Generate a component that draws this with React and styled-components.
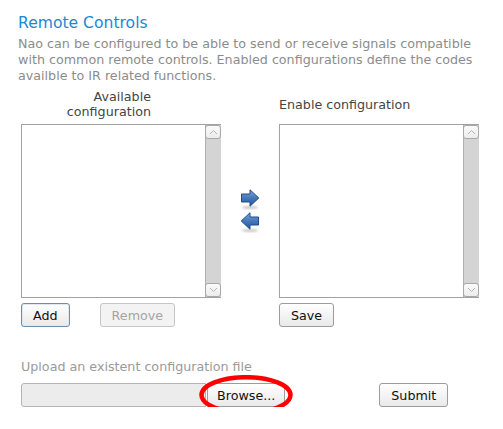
import React from 'react';
import styled, { createGlobalStyle } from 'styled-components';

const Global = createGlobalStyle`
    body {
        margin: 0;
        background: #fff;
        font-family: "DejaVu Sans", Verdana, sans-serif;
    }
`;

const Page = styled.div`
    padding: 13px 0 0 18px;
    width: 485px;
`;

const Title = styled.h2`
    margin: 0;
    font-size: 15.6px;
    line-height: 20px;
    font-weight: normal;
    color: #1a88d4;
`;

const Description = styled.p`
    margin: 3px 0 0 0;
    font-size: 12.7px;
    line-height: 16px;
    color: #8c8c8c;
    width: 470px;
`;

const Form = styled.div`
    margin: 2px 0 0 3px;
    display: grid;
    grid-template-columns: 200px 58px 200px;
`;

const Label = styled.div`
    font-size: 12.7px;
    line-height: 15px;
    color: #444;
    align-self: center;
    text-align: ${p => p.align || 'left'};
    width: ${p => p.width || 'auto'};
    padding: 3px 0 5px 0;
`;

const ListBox = styled.div`
    height: 174px;
    box-sizing: border-box;
    border: 1px solid #a2a2a2;
    background: #fff;
    display: flex;
    justify-content: flex-end;
`;

const Track = styled.div`
    width: 15px;
    margin-right: -1px;
    background: #d4d4d4;
    border-left: 1px solid #b0b0b0;
    display: flex;
    flex-direction: column;
    justify-content: space-between;
`;

const ScrollBtn = styled.div`
    height: 14px;
    box-sizing: border-box;
    border: 1px solid #a8a8a8;
    border-radius: 3px;
    margin-left: -1px;
    background: linear-gradient(#fafafa, #ececec);
    display: flex;
    align-items: center;
    justify-content: center;
`;

const Arrows = styled.div`
    display: flex;
    flex-direction: column;
    align-items: center;
    justify-content: center;
    gap: 2px;
`;

const Buttons = styled.div`
    display: flex;
    gap: 30px;
    padding-top: 5px;
`;

const Button = styled.button`
    height: 24px;
    box-sizing: border-box;
    padding: 0 ${p => p.pad || 11}px;
    font-family: "DejaVu Sans", Verdana, sans-serif;
    font-size: 12.7px;
    color: ${p => (p.disabled ? '#a4a4a4' : '#111')};
    border: 1px solid ${p => (p.focused ? '#6c8cb2' : p.disabled ? '#c6c6c6' : '#9c9c9c')};
    border-radius: 3px;
    background: ${p => (p.disabled ? '#f3f3f3' : 'linear-gradient(#ffffff, #e9e9e9)')};
    box-shadow: ${p => (p.focused ? 'inset 0 0 0 1px #dfe8f3' : 'none')};
`;

const UploadLabel = styled.div`
    margin: 32px 0 0 3px;
    font-size: 12.7px;
    line-height: 16px;
    color: #9a9a9a;
`;

const UploadRow = styled.div`
    margin: 8px 0 0 3px;
    display: flex;
    align-items: center;
`;

const FileField = styled.div`
    width: 185px;
    height: 24px;
    box-sizing: border-box;
    background: #ececec;
    border: 1px solid #b4b4b4;
    border-radius: 3px 0 0 3px;
`;

const BrowseWrap = styled.div`
    position: relative;
    margin-left: 1px;
`;

const Mark = styled.svg`
    position: absolute;
    left: -8px;
    top: -8px;
    pointer-events: none;
`;

const Submit = styled(Button)`
    margin-left: 94px;
`;

function Caret({ up }) {
    return (
        <svg width="9" height="6" viewBox="0 0 9 6">
            <path d={up ? 'M1 5 L4.5 1.5 L8 5' : 'M1 1 L4.5 4.5 L8 1'} fill="none" stroke="#b4b4b4" strokeWidth="1" />
        </svg>
    );
}

function Scroll() {
    return (
        <Track>
            <ScrollBtn>
                <Caret up />
            </ScrollBtn>
            <ScrollBtn>
                <Caret />
            </ScrollBtn>
        </Track>
    );
}

function Arrow({ left, id }) {
    return (
        <svg width="20" height="21" viewBox="0 0 20 21">
            <defs>
                <linearGradient id={id} x1="0" y1="0" x2="0" y2="1">
                    <stop offset="0" stopColor="#7fa8dd" />
                    <stop offset="0.5" stopColor="#4577bb" />
                    <stop offset="1" stopColor="#285796" />
                </linearGradient>
                <filter id={id + 's'} x="-20%" y="-50%" width="140%" height="200%">
                    <feGaussianBlur stdDeviation="1" />
                </filter>
            </defs>
            <ellipse cx="10" cy="18.5" rx="8" ry="1.6" fill="#999" opacity="0.5" filter={`url(#${id}s)`} />
            <g transform={left ? 'translate(20 0) scale(-1 1)' : ''}>
                <path
                    d="M1.5 5 H10 V0.8 L18.8 9 L10 17.2 V13 H1.5 Z"
                    fill={`url(#${id})`}
                    stroke="#214d88"
                    strokeWidth="1"
                    strokeLinejoin="round"
                />
            </g>
        </svg>
    );
}

export default function App() {
    return (
        <Page>
            <Global />
            <Title>Remote Controls</Title>
            <Description>
                Nao can be configured to be able to send or receive signals compatible with common remote controls. Enabled configurations define the codes availble to IR related functions.
            </Description>
            <Form>
                <Label align="right" width="130px">
                    Available
                    <br />
                    configuration
                </Label>
                <div />
                <Label>Enable configuration</Label>

                <ListBox>
                    <Scroll />
                </ListBox>
                <Arrows>
                    <Arrow id="ar" />
                    <Arrow id="al" left />
                </Arrows>
                <ListBox>
                    <Scroll />
                </ListBox>

                <Buttons>
                    <Button focused>Add</Button>
                    <Button disabled>Remove</Button>
                </Buttons>
                <div />
                <Buttons>
                    <Button>Save</Button>
                </Buttons>
            </Form>
            <UploadLabel>Upload an existent configuration file</UploadLabel>
            <UploadRow>
                <FileField />
                <BrowseWrap>
                    <Button pad={9}>Browse...</Button>
                    <Mark width="94" height="40" viewBox="0 0 94 40">
                        <ellipse cx="47" cy="20" rx="44.5" ry="17.8" fill="none" stroke="#f00" strokeWidth="4.5" />
                    </Mark>
                </BrowseWrap>
                <Submit>Submit</Submit>
            </UploadRow>
        </Page>
    );
}
